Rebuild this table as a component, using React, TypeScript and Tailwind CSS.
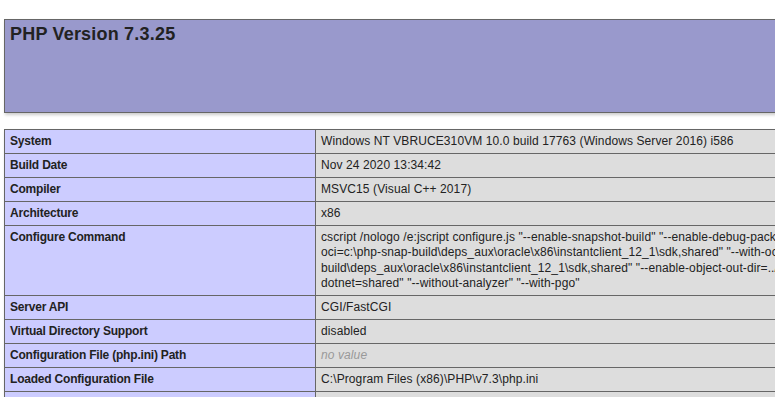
import React from "react";

const rows: { k: string; v: React.ReactNode; lines?: string[] }[] = [
  { k: "System", v: "Windows NT VBRUCE310VM 10.0 build 17763 (Windows Server 2016) i586" },
  { k: "Build Date", v: "Nov 24 2020 13:34:42" },
  { k: "Compiler", v: "MSVC15 (Visual C++ 2017)" },
  { k: "Architecture", v: "x86" },
  {
    k: "Configure Command",
    v: null,
    lines: [
      'cscript /nologo /e:jscript configure.js "--enable-snapshot-build" "--enable-debug-pack" "--with-pdo-',
      'oci=c:\\php-snap-build\\deps_aux\\oracle\\x86\\instantclient_12_1\\sdk,shared" "--with-oci8-12c=c:\\php-snap-',
      'build\\deps_aux\\oracle\\x86\\instantclient_12_1\\sdk,shared" "--enable-object-out-dir=../obj/" "--enable-com-',
      'dotnet=shared" "--without-analyzer" "--with-pgo"',
    ],
  },
  { k: "Server API", v: "CGI/FastCGI" },
  { k: "Virtual Directory Support", v: "disabled" },
  { k: "Configuration File (php.ini) Path", v: <i className="text-[#999]">no value</i> },
  { k: "Loaded Configuration File", v: "C:\\Program Files (x86)\\PHP\\v7.3\\php.ini" },
  { k: "Scan this dir for additional .ini files", v: <i className="text-[#999]">(none)</i> },
  { k: "Additional .ini files parsed", v: <i className="text-[#999]">(none)</i> },
];

export default function App() {
  return (
    <div className="w-[775px] h-[397px] overflow-hidden bg-white text-[#222] font-['Liberation_Sans',Arial,sans-serif]">
      <div className="w-[960px] pl-[4px] pt-[19px]">
        <table className="w-[934px] border-collapse shadow-[1px_2px_3px_#ccc]">
          <tbody>
            <tr>
              <td className="h-[93px] border border-[#666] bg-[#99c] px-[5px] py-[4px] align-top text-left">
                <h1 className="text-[18px] font-bold leading-[21px] tracking-[0.2px]">PHP Version 7.3.25</h1>
              </td>
            </tr>
          </tbody>
        </table>
        <table className="mt-[16px] w-[934px] border-collapse shadow-[1px_2px_3px_#ccc] text-[12px] leading-[15px]">
          <tbody>
            {rows.map((r) => (
              <tr key={r.k}>
                <td className="w-[311px] border border-[#666] bg-[#ccf] px-[5px] py-[4px] font-bold tracking-[-0.2px] align-baseline text-left whitespace-nowrap">
                  {r.k}
                </td>
                <td className="border border-[#666] bg-[#ddd] px-[5px] py-[4px] tracking-[0.1px] align-baseline text-left whitespace-nowrap">
                  {r.lines ? (
                    <div className="leading-[15.25px]">
                      {r.lines.map((l) => (
                        <div key={l}>{l}</div>
                      ))}
                    </div>
                  ) : (
                    r.v
                  )}
                </td>
              </tr>
            ))}
          </tbody>
        </table>
      </div>
    </div>
  );
}
